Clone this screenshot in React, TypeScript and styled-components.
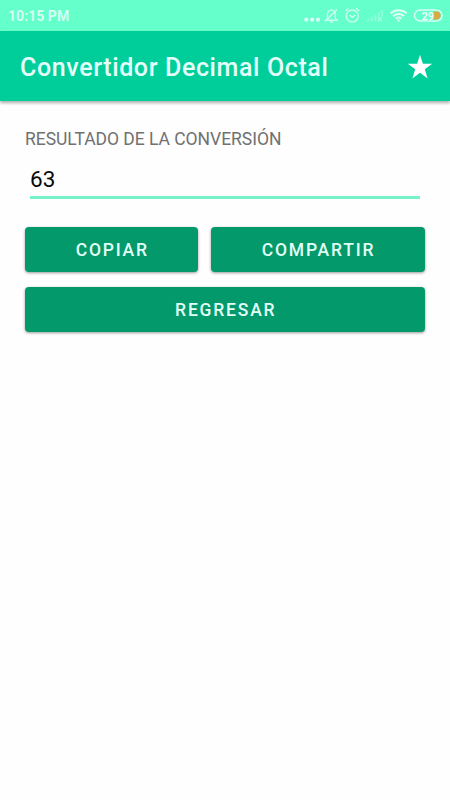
import React from "react";
import styled, { createGlobalStyle } from "styled-components";

const GlobalStyle = createGlobalStyle`
  * { box-sizing: border-box; }
  body { margin: 0; background: #fefefe; font-family: Roboto, "Liberation Sans", sans-serif; }
`;

const Screen = styled.div`
  width: 450px;
  height: 800px;
  overflow: hidden;
  display: flex;
  flex-direction: column;
  background: #fefefe;
`;

const StatusBar = styled.div`
  flex: none;
  height: 31px;
  padding: 0 7px 0 8px;
  display: flex;
  align-items: center;
  justify-content: space-between;
  background: #64ffca;
`;

const Clock = styled.span`
  font-size: 14px;
  font-weight: 700;
  line-height: 31px;
  padding-top: 1px;
  letter-spacing: 0.05px;
  color: #d3fff3;
`;

const StatusIcons = styled.svg`
  display: block;
  flex: none;
`;

const AppBar = styled.header`
  flex: none;
  height: 70px;
  padding: 4px 16px 0 20px;
  display: flex;
  align-items: center;
  justify-content: space-between;
  background: #00ce9a;
  box-shadow: 0 2px 3px rgba(0, 0, 0, 0.32);
`;

const Title = styled.h1`
  margin: 0;
  font-size: 25px;
  font-weight: 500;
  line-height: 30px;
  letter-spacing: 0.62px;
  white-space: nowrap;
  color: #e4fffa;
`;

const StarButton = styled.button`
  border: 0;
  padding: 0;
  background: none;
  display: block;
  width: 28px;
  height: 28px;
`;

const Content = styled.main`
  padding: 28px 25px 0;
  display: flex;
  flex-direction: column;
`;

const Label = styled.label`
  font-size: 17.5px;
  line-height: 20px;
  letter-spacing: -0.03px;
  white-space: nowrap;
  color: #717171;
`;

const Result = styled.output`
  margin: 14px 5px 0;
  height: 36px;
  border-bottom: 3px solid #77f3ca;
  font-size: 22.5px;
  line-height: 33px;
  color: #080808;
`;

const Actions = styled.div`
  margin-top: 28px;
  display: grid;
  grid-template-columns: 173px 1fr;
  gap: 15px 12.5px;
`;

const ActionButton = styled.button<{ $wide?: boolean }>`
  grid-column: ${({ $wide }) => ($wide ? "1 / -1" : "auto")};
  height: 45px;
  border: 0;
  padding: 1px 0 0 1.5px;
  border-radius: 4px;
  background: #03996b;
  box-shadow: 0 1px 3px rgba(0, 0, 0, 0.4);
  color: #e2fff7;
  font-family: inherit;
  font-size: 17.5px;
  font-weight: 500;
  letter-spacing: 1.8px;
`;

function DeviceIcons() {
  return (
    <StatusIcons width="142" height="31" viewBox="301 0 142 31" fill="none" stroke="#c8fff0" strokeWidth="1.5">
      <g fill="#d8fff5" stroke="none">
        <circle cx="306.3" cy="19.7" r="2.1" />
        <circle cx="312.1" cy="19.7" r="2.1" />
        <circle cx="317.9" cy="19.7" r="2.1" />
      </g>
      <path d="M325.8 20.2h11.2l-1.7-2v-4.3c0-5-7.8-5-7.8 0v4.3zM331.4 8.7v1.5M330 22h2.8M325 21.4 337 9.4" strokeWidth="1.4" />
      <circle cx="352.3" cy="16" r="6" />
      <path d="m345.3 11 3.2-2.7M359.3 11l-3.2-2.7M349.6 15l2.7 2.2 3-2.2" />
      <path d="M368.2 18.5V21M371.8 16.5V21M375.4 14.5V21M379 12.5v4M382.2 10v6.5" stroke="#8cffdc" strokeWidth="2" />
      <path d="m377.8 17.3 4 4m0-4-4 4" stroke="#a5ffe3" strokeWidth="1.3" />
      <g stroke="#dcfff6" strokeWidth="2">
        <path d="M390.6 13.3c4.6-4.2 11.5-4.2 16.1 0M393.1 16.2c3.2-2.9 7.9-2.9 11.1 0M395.7 18.8c1.8-1.5 4.1-1.5 5.9 0" />
        <path d="m396.9 20 1.7 2 1.7-2c-1-.8-2.4-.8-3.4 0z" fill="#dcfff6" stroke="none" />
      </g>
      <path d="M433.5 11.5h3.1a4 4 0 0 1 0 8h-3.1z" fill="#d7aa45" stroke="none" />
      <rect x="414.5" y="10" width="27.5" height="11" rx="5.5" stroke="#d2fff3" />
      <text x="421.5" y="19.5" fill="#e7fff9" stroke="none" fontFamily="Roboto, sans-serif" fontSize="11" fontWeight="700">29</text>
    </StatusIcons>
  );
}

export default function App() {
  return (
    <>
      <GlobalStyle />
      <Screen>
        <StatusBar>
          <Clock>10:15 PM</Clock>
          <DeviceIcons />
        </StatusBar>
        <AppBar>
          <Title>Convertidor Decimal Octal</Title>
          <StarButton aria-label="Favorito">
            <svg width="28" height="28" viewBox="0 0 28 28" fill="#fff">
              <path d="m14 .8 2.9 9h9.3l-7.4 5.5 2.8 9.2-7.6-5.7-7.6 5.7 2.8-9.2-7.4-5.5h9.3z" />
            </svg>
          </StarButton>
        </AppBar>
        <Content>
          <Label htmlFor="resultado">RESULTADO DE LA CONVERSIÓN</Label>
          <Result id="resultado">63</Result>
          <Actions>
            <ActionButton>COPIAR</ActionButton>
            <ActionButton>COMPARTIR</ActionButton>
            <ActionButton $wide>REGRESAR</ActionButton>
          </Actions>
        </Content>
      </Screen>
    </>
  );
}
